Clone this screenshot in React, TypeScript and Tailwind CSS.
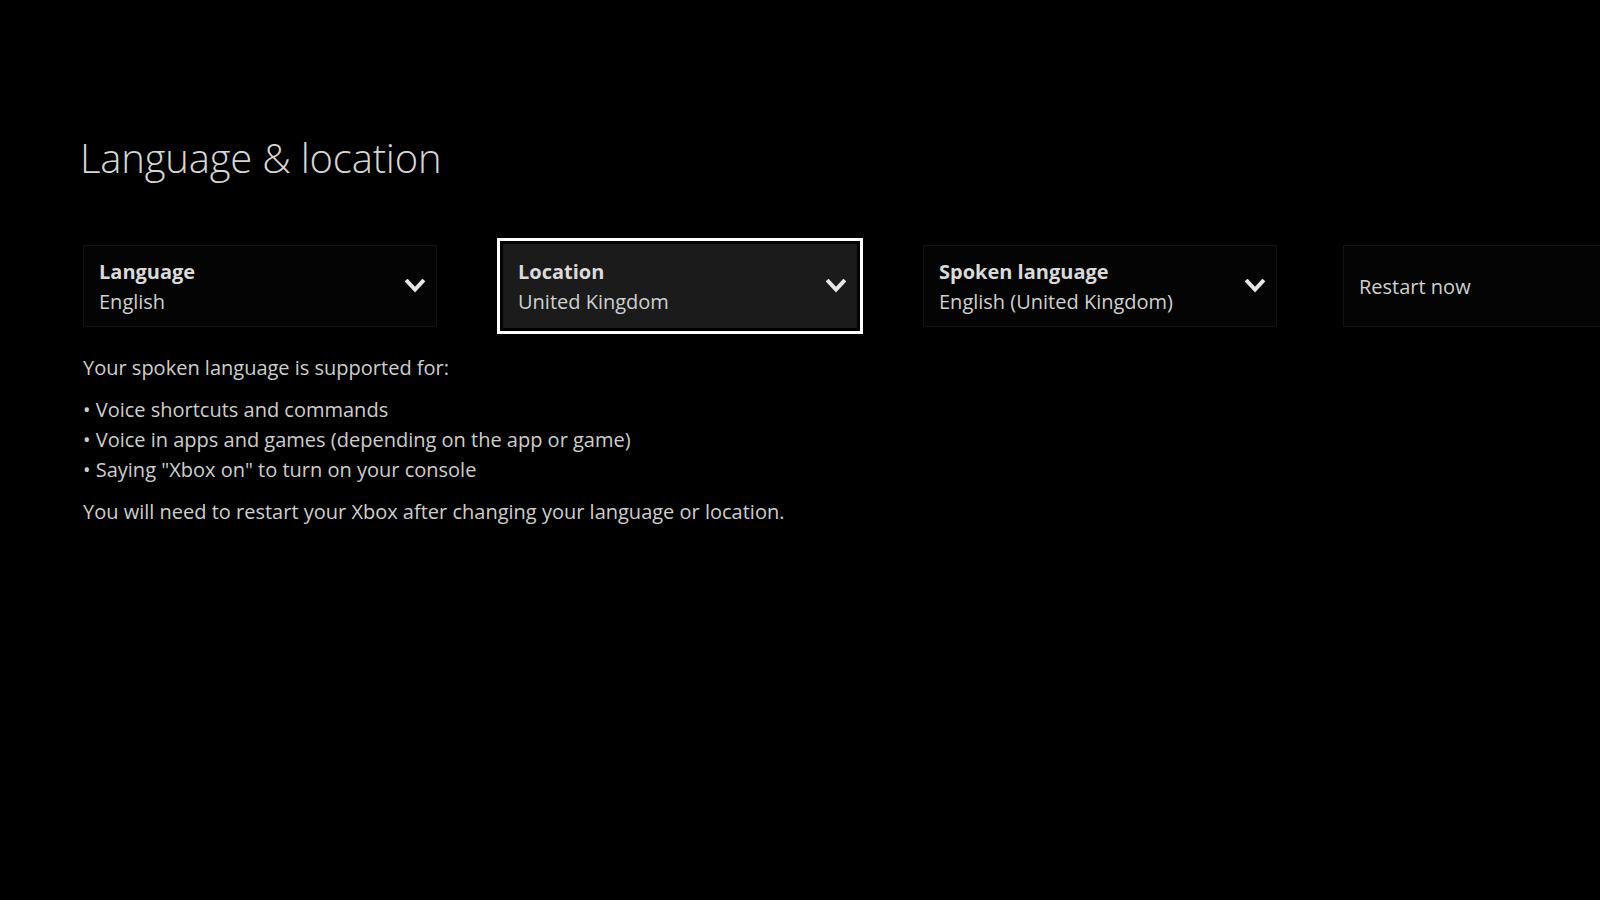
import React from 'react';

function Chevron() {
  return (
    <svg width="20" height="14" viewBox="0 0 20 14" className="shrink-0">
      <polyline
        points="2.5,2.5 10,10.5 17.5,2.5"
        fill="none"
        stroke="#e6e6e6"
        strokeWidth="4"
        strokeLinecap="square"
      />
    </svg>
  );
}

type CardProps = {
  label?: string;
  value: string;
  focused?: boolean;
  dropdown?: boolean;
};

function SettingCard({ label, value, focused, dropdown }: CardProps) {
  return (
    <div
      className={
        focused
          ? 'flex h-[84px] w-[354px] shrink-0 items-center justify-between bg-[#1b1b1b] pl-[15px] pr-[11px] outline-[3px] outline-white outline-offset-[3px]'
          : 'flex h-[82px] w-[354px] shrink-0 items-center justify-between border border-[#131313] bg-[#040404] pl-[15px] pr-[11px]'
      }
    >
      <div className="flex flex-col pt-[2px]">
        {label && <span className="text-[20px] leading-[30px] font-bold text-[#dadada]">{label}</span>}
        <span className="text-[20px] leading-[30px] text-[#d0d0d0]">{value}</span>
      </div>
      {dropdown && <Chevron />}
    </div>
  );
}

export default function App() {
  return (
    <div
      className="h-[900px] w-[1600px] overflow-hidden bg-black"
      style={{ fontFamily: '"Open Sans", "Noto Sans", sans-serif' }}
    >
      <div className="pl-[80px] pt-[134px]">
        <h1 className="text-[40px] leading-[48px] font-light tracking-[-0.2px] text-[#d6d6d6]">
          Language &amp; location
        </h1>
      </div>

      <div className="mt-[62px] flex items-center gap-[66px] pl-[83px]">
        <SettingCard label="Language" value="English" dropdown />
        <SettingCard label="Location" value="United Kingdom" dropdown focused />
        <SettingCard label="Spoken language" value="English (United Kingdom)" dropdown />
        <SettingCard value="Restart now" />
      </div>

      <div className="mt-[25px] pl-[83px] text-[20px] leading-[30px] text-[#cecece]">
        <p>Your spoken language is supported for:</p>
        <ul className="mt-[12px]">
          <li>• Voice shortcuts and commands</li>
          <li>• Voice in apps and games (depending on the app or game)</li>
          <li>• Saying "Xbox on" to turn on your console</li>
        </ul>
        <p className="mt-[12px]">
          You will need to restart your Xbox after changing your language or location.
        </p>
      </div>
    </div>
  );
}
